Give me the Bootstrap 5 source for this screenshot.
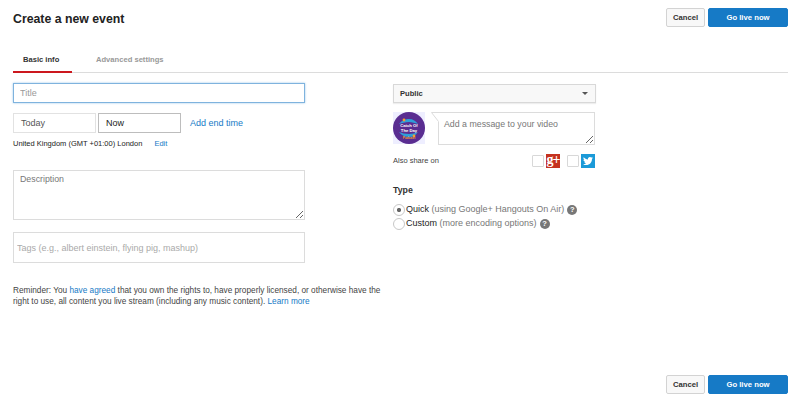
<!doctype html>
<html lang="en">
<head>
<meta charset="utf-8">
<title>Create a new event</title>
<link href="https://cdn.jsdelivr.net/npm/bootstrap@5.3.0/dist/css/bootstrap.min.css" rel="stylesheet">
<style>
html,body{height:400px;overflow:hidden}
body{font-family:"Liberation Sans",Arial,sans-serif;font-size:9px;color:#333;background:#fff}
a{color:#167ac6;text-decoration:none}
.shell{height:400px;width:775px;margin-left:13px;padding:8px 0 6px}
.head-title{font-size:12.3px;font-weight:700;line-height:19px;color:#222;margin:2px 0 0}
.yt-btn{font-size:7.7px;font-weight:700;height:19px;line-height:17px;padding:0;border-radius:2px}
.yt-cancel{width:39px;background:#f8f8f8;border:1px solid #d3d3d3;color:#333}
.yt-go{width:80px;background:#167ac6;border:1px solid #167ac6;color:#fff}
.btn-pair{gap:3px}
.tabbar{margin-top:24px;height:20px;border-bottom:1px solid #dcdcdc}
.tabitem{font-size:7.6px;font-weight:700;line-height:14px;padding:0 10px;height:20px;color:#999;white-space:nowrap}
.tabitem.on{color:#333;width:59px;border-bottom:2px solid #cc181e}
.tabitem.off{margin-left:14px}
.form-side{width:380px}
.extra-side{width:203px}
.cols{margin-top:9px}
.fld{display:block;border:1px solid #d3d3d3;border-radius:0;background:#fff;font-family:inherit;font-size:9px;color:#333;padding:0 6px;width:292px;outline:0}
.fld::placeholder{color:#999;opacity:1}
.fld-title{height:20px;border:1px solid #7fb3de;box-shadow:0 0 2px #9cc6e8;margin-top:1px}
.date-row{margin-top:10px;height:20px;gap:2px}
.fld-date{width:83px;height:20px;padding:0 7px;line-height:18px}
.fld-today{border-color:#e2e2e2;color:#555}
.fld-now{border-color:#bdbdbd;color:#222}
.add-end{margin-left:7px;font-size:9px;line-height:19px}
.tz-row{font-size:7.5px;line-height:11px;margin-top:5px;color:#222}
.tz-row a{margin-left:10px}
.fld-desc{height:50px;margin-top:21px;padding:2px 6px;resize:both;line-height:13px;border-color:#dcdcdc;color:#777;font-size:8.8px}
.fld-desc::placeholder{color:#777}
.fld-tags{height:31px;margin-top:12px;padding:0 3px;border-color:#dcdcdc}
.fld-tags::placeholder{color:#aaa}
.reminder{font-size:8.26px;line-height:11px;margin:22px 0 0;color:#444;width:372px}
.pick{width:203px;height:19px;background:#f8f8f8;border:1px solid #d8d8d8;box-shadow:0 1px 1px #eee;font-size:7.6px;font-weight:700;color:#333;padding:0 7px 0 6px;margin:2px 0 0;border-radius:0}
.caret-down{width:0;height:0;border-left:3px solid transparent;border-right:3px solid transparent;border-top:3px solid #555}
.share-box{margin-top:9px;height:34px}
.poster{width:32px;height:32px;flex:none}
.msg-wrap{width:158px;height:33px;margin-left:13px;position:relative}
.fld-msg{width:157px;height:33px;padding:5px 5px;font-size:8.8px;line-height:13px;resize:both;border-color:#dcdcdc;color:#777}
.fld-msg::placeholder{color:#777}
.notch{position:absolute;left:-7px;top:0;width:8px;height:10px}
.also{margin-top:8px;height:14px;width:203px}
.also-txt{font-size:7.5px;color:#444}
.social{margin-right:1px}
.tickbox{width:12px;height:12px;border:1px solid #d8d8d8;border-radius:1px;background:#fff;margin:0 2px 0 0;appearance:none;flex:none}
.tickbox.second{margin-left:7px}
.soc-g{width:14px;height:14px;background:#c5321f;color:#fff;font-family:"Liberation Serif",serif;font-weight:700;font-size:14px;line-height:11px;text-align:center;letter-spacing:-1px;white-space:nowrap;overflow:visible}
.soc-t{width:14px;height:14px;background:#1b9ad8;padding:2px}
.soc-t svg{display:block;width:10px;height:10px}
.type-head{font-size:8.8px;font-weight:700;color:#333;line-height:13px;margin-top:16px}
.choice{height:14px;font-size:9px;color:#777;white-space:nowrap}
.choice b{font-weight:400;color:#222}
.first-choice{margin-top:6px}
.radio-in{width:12px;height:12px;margin:0 1px 0 0;border:1px solid #c8c8c8;border-radius:50%;appearance:none;background:#fff;flex:none}
.radio-in:checked{background:radial-gradient(circle,#666 0 1.8px,#fff 2.4px)}
.qmark{display:inline-block;width:10px;height:10px;border-radius:50%;background:#777;color:#fff;font-size:7.5px;font-weight:700;line-height:10px;text-align:center;margin-left:3px;flex:none}
.space-fill{flex:1 1 auto}
</style>
</head>
<body>
<div class="shell d-flex flex-column">
  <div class="d-flex justify-content-between align-items-start">
    <div class="head-title">Create a new event</div>
    <div class="d-flex btn-pair">
      <button class="btn yt-btn yt-cancel">Cancel</button>
      <button class="btn yt-btn yt-go">Go live now</button>
    </div>
  </div>
  <div class="d-flex tabbar">
    <div class="tabitem on">Basic info</div>
    <div class="tabitem off">Advanced settings</div>
  </div>
  <div class="d-flex cols">
    <div class="form-side">
      <input class="fld fld-title" placeholder="Title">
      <div class="d-flex align-items-center date-row">
        <div class="fld fld-date fld-today">Today</div>
        <div class="fld fld-date fld-now">Now</div>
        <a class="add-end" href="#">Add end time</a>
      </div>
      <div class="tz-row">United Kingdom (GMT +01:00) London <a href="#">Edit</a></div>
      <textarea class="fld fld-desc" placeholder="Description"></textarea>
      <input class="fld fld-tags" placeholder="Tags (e.g., albert einstein, flying pig, mashup)">
      <p class="reminder">Reminder: You <a href="#">have agreed</a> that you own the rights to, have properly licensed, or otherwise have the right to use, all content you live stream (including any music content). <a href="#">Learn more</a></p>
    </div>
    <div class="extra-side">
      <button class="btn pick d-flex align-items-center justify-content-between">Public <span class="caret-down"></span></button>
      <div class="d-flex share-box">
        <svg class="poster" viewBox="0 0 32 32" role="img" aria-label="Catch Of The Day podcast">
          <rect width="32" height="32" fill="#eef"/>
          <circle cx="16" cy="16" r="16" fill="#5a2d91"/>
          <path d="M6 12c3-4 7-5 10-5 4 0 7 2 9 5-3-1-6-2-9-2-4 0-7 1-10 2z" fill="#2f9fd8"/>
          <path d="M6 20c3 1 6 2 10 2 3 0 6-1 9-2-2 3-5 5-9 5-3 0-7-1-10-5z" fill="#2f9fd8"/>
          <circle cx="11" cy="8" r="1.4" fill="#f0a030"/><circle cx="21" cy="24" r="1.4" fill="#f0a030"/>
          <text x="16" y="14.5" font-size="4.2" font-weight="700" fill="#fff" text-anchor="middle" font-family="Liberation Sans">Catch Of</text>
          <text x="16" y="20" font-size="4.2" font-weight="700" fill="#fff" text-anchor="middle" font-family="Liberation Sans">The Day</text>
          <text x="16" y="27" font-size="3.2" font-weight="700" fill="#f0a030" text-anchor="middle" font-family="Liberation Sans">Podcast</text>
        </svg>
        <div class="msg-wrap">
          <textarea class="fld fld-msg" placeholder="Add a message to your video"></textarea>
          <svg class="notch" viewBox="0 0 8 10"><path d="M8 .5H0L7.5 9.5V10H8z" fill="#fff"/><path d="M8 .5H.5L7.5 9.5" fill="none" stroke="#dcdcdc"/></svg>
        </div>
      </div>
      <div class="d-flex justify-content-between align-items-center also">
        <span class="also-txt">Also share on</span>
        <div class="d-flex align-items-center social">
          <input class="tickbox" type="checkbox" aria-label="Google+">
          <div class="soc-g">g+</div>
          <input class="tickbox second" type="checkbox" aria-label="Twitter">
          <div class="soc-t"><svg viewBox="0 0 24 24"><path fill="#fff" d="M23.953 4.57a10 10 0 01-2.825.775 4.958 4.958 0 002.163-2.723c-.951.555-2.005.959-3.127 1.184a4.92 4.92 0 00-8.384 4.482C7.69 8.095 4.067 6.13 1.64 3.162a4.822 4.822 0 00-.666 2.475c0 1.71.87 3.213 2.188 4.096a4.904 4.904 0 01-2.228-.616v.06a4.923 4.923 0 003.946 4.827 4.996 4.996 0 01-2.212.085 4.936 4.936 0 004.604 3.417 9.867 9.867 0 01-6.102 2.105c-.39 0-.779-.023-1.17-.067a13.995 13.995 0 007.557 2.209c9.053 0 13.998-7.496 13.998-13.985 0-.21 0-.42-.015-.63A9.935 9.935 0 0024 4.59z"/></svg></div>
        </div>
      </div>
      <div class="type-head">Type</div>
      <label class="d-flex align-items-center choice first-choice"><input class="radio-in" type="radio" name="kind" checked><b>Quick</b>&nbsp;(using Google+ Hangouts On Air)<span class="qmark">?</span></label>
      <label class="d-flex align-items-center choice"><input class="radio-in" type="radio" name="kind"><b>Custom</b>&nbsp;(more encoding options)<span class="qmark">?</span></label>
    </div>
  </div>
  <div class="space-fill"></div>
  <div class="d-flex justify-content-end btn-pair">
    <button class="btn yt-btn yt-cancel">Cancel</button>
    <button class="btn yt-btn yt-go">Go live now</button>
  </div>
</div>
</body>
</html>
